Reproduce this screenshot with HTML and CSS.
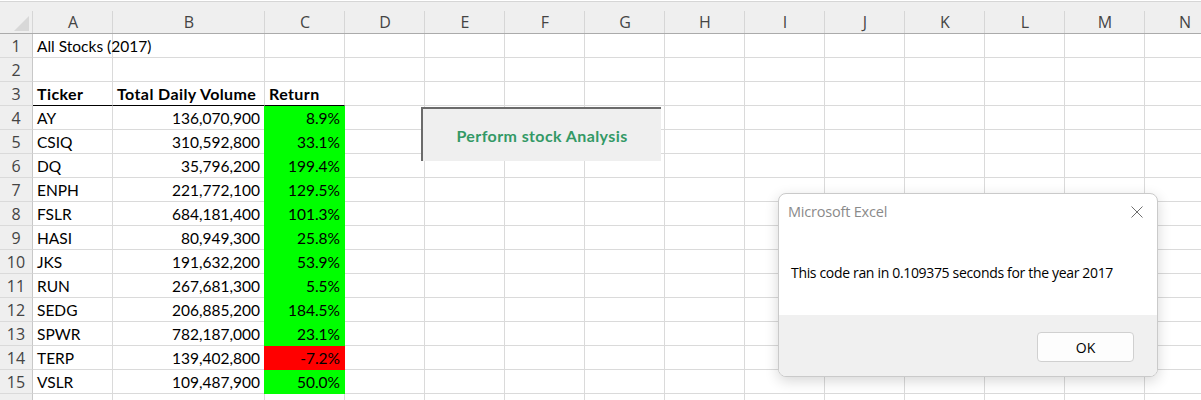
FILE: index.html
```html
<!DOCTYPE html>
<html>
<head>
<meta charset="utf-8">
<title>All Stocks (2017)</title>
<link rel="stylesheet" href="styles.css">
</head>
<body>
<div class="topbar"></div>
<div class="sheet">
  <div class="row hdr">
    <div class="hc corner"><span class="tri"></span></div>
    <div class="hc a">A</div><div class="hc b">B</div><div class="hc c">C</div><div class="hc x">D</div><div class="hc x">E</div><div class="hc x">F</div><div class="hc x">G</div><div class="hc x">H</div><div class="hc x">I</div><div class="hc x">J</div><div class="hc x">K</div><div class="hc x">L</div><div class="hc x">M</div><div class="hc x">N</div>
  </div>
  <div class="row">
    <div class="cell rh">1</div><div class="cell a">All Stocks (2017)</div><div class="cell b"></div><div class="cell c"></div><div class="cell x"></div><div class="cell x"></div><div class="cell x"></div><div class="cell x"></div><div class="cell x"></div><div class="cell x"></div><div class="cell x"></div><div class="cell x"></div><div class="cell x"></div><div class="cell x"></div><div class="cell x"></div>
  </div>
  <div class="row">
    <div class="cell rh">2</div><div class="cell a"></div><div class="cell b"></div><div class="cell c"></div><div class="cell x"></div><div class="cell x"></div><div class="cell x"></div><div class="cell x"></div><div class="cell x"></div><div class="cell x"></div><div class="cell x"></div><div class="cell x"></div><div class="cell x"></div><div class="cell x"></div><div class="cell x"></div>
  </div>
  <div class="row heads">
    <div class="cell rh">3</div><div class="cell a th">Ticker</div><div class="cell b th">Total Daily Volume</div><div class="cell c th">Return</div><div class="cell x"></div><div class="cell x"></div><div class="cell x"></div><div class="cell x"></div><div class="cell x"></div><div class="cell x"></div><div class="cell x"></div><div class="cell x"></div><div class="cell x"></div><div class="cell x"></div><div class="cell x"></div>
  </div>
  <div class="row">
    <div class="cell rh">4</div><div class="cell a">AY</div><div class="cell b num">136,070,900</div><div class="cell c num up">8.9%</div><div class="cell x"></div><div class="cell x"></div><div class="cell x"></div><div class="cell x"></div><div class="cell x"></div><div class="cell x"></div><div class="cell x"></div><div class="cell x"></div><div class="cell x"></div><div class="cell x"></div><div class="cell x"></div>
  </div>
  <div class="row">
    <div class="cell rh">5</div><div class="cell a">CSIQ</div><div class="cell b num">310,592,800</div><div class="cell c num up">33.1%</div><div class="cell x"></div><div class="cell x"></div><div class="cell x"></div><div class="cell x"></div><div class="cell x"></div><div class="cell x"></div><div class="cell x"></div><div class="cell x"></div><div class="cell x"></div><div class="cell x"></div><div class="cell x"></div>
  </div>
  <div class="row">
    <div class="cell rh">6</div><div class="cell a">DQ</div><div class="cell b num">35,796,200</div><div class="cell c num up">199.4%</div><div class="cell x"></div><div class="cell x"></div><div class="cell x"></div><div class="cell x"></div><div class="cell x"></div><div class="cell x"></div><div class="cell x"></div><div class="cell x"></div><div class="cell x"></div><div class="cell x"></div><div class="cell x"></div>
  </div>
  <div class="row">
    <div class="cell rh">7</div><div class="cell a">ENPH</div><div class="cell b num">221,772,100</div><div class="cell c num up">129.5%</div><div class="cell x"></div><div class="cell x"></div><div class="cell x"></div><div class="cell x"></div><div class="cell x"></div><div class="cell x"></div><div class="cell x"></div><div class="cell x"></div><div class="cell x"></div><div class="cell x"></div><div class="cell x"></div>
  </div>
  <div class="row">
    <div class="cell rh">8</div><div class="cell a">FSLR</div><div class="cell b num">684,181,400</div><div class="cell c num up">101.3%</div><div class="cell x"></div><div class="cell x"></div><div class="cell x"></div><div class="cell x"></div><div class="cell x"></div><div class="cell x"></div><div class="cell x"></div><div class="cell x"></div><div class="cell x"></div><div class="cell x"></div><div class="cell x"></div>
  </div>
  <div class="row">
    <div class="cell rh">9</div><div class="cell a">HASI</div><div class="cell b num">80,949,300</div><div class="cell c num up">25.8%</div><div class="cell x"></div><div class="cell x"></div><div class="cell x"></div><div class="cell x"></div><div class="cell x"></div><div class="cell x"></div><div class="cell x"></div><div class="cell x"></div><div class="cell x"></div><div class="cell x"></div><div class="cell x"></div>
  </div>
  <div class="row">
    <div class="cell rh">10</div><div class="cell a">JKS</div><div class="cell b num">191,632,200</div><div class="cell c num up">53.9%</div><div class="cell x"></div><div class="cell x"></div><div class="cell x"></div><div class="cell x"></div><div class="cell x"></div><div class="cell x"></div><div class="cell x"></div><div class="cell x"></div><div class="cell x"></div><div class="cell x"></div><div class="cell x"></div>
  </div>
  <div class="row">
    <div class="cell rh">11</div><div class="cell a">RUN</div><div class="cell b num">267,681,300</div><div class="cell c num up">5.5%</div><div class="cell x"></div><div class="cell x"></div><div class="cell x"></div><div class="cell x"></div><div class="cell x"></div><div class="cell x"></div><div class="cell x"></div><div class="cell x"></div><div class="cell x"></div><div class="cell x"></div><div class="cell x"></div>
  </div>
  <div class="row">
    <div class="cell rh">12</div><div class="cell a">SEDG</div><div class="cell b num">206,885,200</div><div class="cell c num up">184.5%</div><div class="cell x"></div><div class="cell x"></div><div class="cell x"></div><div class="cell x"></div><div class="cell x"></div><div class="cell x"></div><div class="cell x"></div><div class="cell x"></div><div class="cell x"></div><div class="cell x"></div><div class="cell x"></div>
  </div>
  <div class="row">
    <div class="cell rh">13</div><div class="cell a">SPWR</div><div class="cell b num">782,187,000</div><div class="cell c num up">23.1%</div><div class="cell x"></div><div class="cell x"></div><div class="cell x"></div><div class="cell x"></div><div class="cell x"></div><div class="cell x"></div><div class="cell x"></div><div class="cell x"></div><div class="cell x"></div><div class="cell x"></div><div class="cell x"></div>
  </div>
  <div class="row">
    <div class="cell rh">14</div><div class="cell a">TERP</div><div class="cell b num">139,402,800</div><div class="cell c num down">-7.2%</div><div class="cell x"></div><div class="cell x"></div><div class="cell x"></div><div class="cell x"></div><div class="cell x"></div><div class="cell x"></div><div class="cell x"></div><div class="cell x"></div><div class="cell x"></div><div class="cell x"></div><div class="cell x"></div>
  </div>
  <div class="row">
    <div class="cell rh">15</div><div class="cell a">VSLR</div><div class="cell b num">109,487,900</div><div class="cell c num up">50.0%</div><div class="cell x"></div><div class="cell x"></div><div class="cell x"></div><div class="cell x"></div><div class="cell x"></div><div class="cell x"></div><div class="cell x"></div><div class="cell x"></div><div class="cell x"></div><div class="cell x"></div><div class="cell x"></div>
  </div>
  <div class="row">
    <div class="cell rh"></div><div class="cell a"></div><div class="cell b"></div><div class="cell c"></div><div class="cell x"></div><div class="cell x"></div><div class="cell x"></div><div class="cell x"></div><div class="cell x"></div><div class="cell x"></div><div class="cell x"></div><div class="cell x"></div><div class="cell x"></div><div class="cell x"></div><div class="cell x"></div>
  </div>
</div>

<div class="macro-btn">Perform stock Analysis</div>

<div class="dialog">
  <div class="dlg-head">
    <span class="dlg-title">Microsoft Excel</span>
    <svg class="dlg-close" width="12" height="12" viewBox="0 0 12 12"><path d="M0.5 0.5 L11.5 11.5 M11.5 0.5 L0.5 11.5" stroke="#6e6e6e" stroke-width="1" fill="none"/></svg>
  </div>
  <div class="dlg-body">This code ran in 0.109375 seconds for the year 2017</div>
  <div class="dlg-foot">
    <div class="ok-btn">OK</div>
  </div>
</div>
</body>
</html>
```

FILE: styles.css
```css
html, body {
  margin: 0;
  padding: 0;
}
body {
  width: 1201px;
  height: 400px;
  overflow: hidden;
  position: relative;
  background: #fff;
  font-family: Lato, "Liberation Sans", sans-serif;
}
.topbar {
  height: 1px;
  background: #fff;
  border-bottom: 1px solid #d6d6d6;
}
.sheet {
  width: 1260px;
}
.row {
  display: flex;
  height: 24px;
}
.hdr {
  height: 32px;
  background: #efefef;
  border-bottom: 1px solid #ababab;
  box-sizing: border-box;
}
.a { width: 80px; }
.b { width: 152px; }
.c { width: 80px; }
.x { width: 80px; }

.hc {
  flex: none;
  box-sizing: border-box;
  position: relative;
  display: flex;
  align-items: flex-end;
  justify-content: center;
  padding-bottom: 1px;
  font-family: "Open Sans", "Noto Sans", sans-serif;
  font-size: 16px;
  line-height: 20px;
  color: #444;
}
.hc::before {
  content: "";
  position: absolute;
  left: -1px;
  top: 9px;
  bottom: 0;
  width: 1px;
  background: #d6d6d6;
}
.corner {
  width: 33px;
}
.corner::before { display: none; }
.corner::after {
  content: "";
  position: absolute;
  right: 0;
  top: 9px;
  bottom: 0;
  width: 1px;
  background: #c8c8c8;
}
.tri {
  position: absolute;
  left: 14px;
  top: 14px;
  width: 15px;
  height: 15px;
  background: #d8d8d8;
  clip-path: polygon(100% 0, 100% 100%, 0 100%);
}

.cell {
  flex: none;
  box-sizing: border-box;
  height: 24px;
  border-right: 1px solid #dadada;
  border-bottom: 1px solid #dadada;
  padding: 0 4px 2px;
  display: flex;
  align-items: flex-end;
  font-size: 15.5px;
  line-height: 18px;
  white-space: nowrap;
  color: #000;
}
.rh {
  width: 33px;
  background: #efefef;
  border-right-color: #c8c8c8;
  justify-content: center;
  padding: 0 0 1px;
  font-family: "Open Sans", "Noto Sans", sans-serif;
  font-size: 16px;
  line-height: 20px;
  color: #444;
}
.num {
  justify-content: flex-end;
}
.th {
  font-weight: 700;
  font-size: 16px;
  letter-spacing: 0.4px;
}
.heads .a, .heads .b, .heads .c {
  border-bottom-color: #000;
}
.up {
  background: #00ff00;
  border-color: #00ff00;
  box-shadow: -1px 0 0 #00ff00;
}
.down {
  background: #ff0000;
  border-color: #ff0000;
  box-shadow: -1px 0 0 #ff0000;
}

.macro-btn {
  position: absolute;
  left: 421px;
  top: 107px;
  width: 240px;
  height: 54px;
  box-sizing: border-box;
  background: #efefef;
  border-top: 2px solid #6b6b6b;
  border-left: 2px solid #6b6b6b;
  display: flex;
  align-items: center;
  justify-content: center;
  font-family: Lato, "Liberation Sans", sans-serif;
  font-weight: 700;
  font-size: 16px;
  letter-spacing: 0.4px;
  color: #339966;
}

.dialog {
  position: absolute;
  left: 778px;
  top: 193px;
  width: 380px;
  height: 184px;
  box-sizing: border-box;
  border: 1px solid #cacaca;
  border-radius: 8px;
  background: #fff;
  box-shadow: 0 4px 14px rgba(0, 0, 0, 0.16);
  overflow: hidden;
  display: flex;
  flex-direction: column;
  font-family: "Open Sans", "Noto Sans", sans-serif;
}
.dlg-head {
  height: 35px;
  flex: none;
  display: flex;
  align-items: center;
  justify-content: space-between;
  padding: 0 14px 0 9px;
}
.dlg-title {
  font-size: 14.5px;
  line-height: 20px;
  letter-spacing: -0.2px;
  color: #8a8a8a;
}
.dlg-close {
  display: block;
}
.dlg-body {
  flex: 1;
  padding: 34px 0 0 12px;
  font-size: 14px;
  line-height: 20px;
  letter-spacing: -0.33px;
  color: #000;
}
.dlg-foot {
  flex: none;
  height: 61px;
  box-sizing: border-box;
  background: #f0f0f0;
  display: flex;
  justify-content: flex-end;
  align-items: flex-start;
  padding: 17px 23px 0 0;
}
.ok-btn {
  width: 97px;
  height: 30px;
  box-sizing: border-box;
  border: 1px solid #d0d0d0;
  border-radius: 4px;
  background: #fdfdfd;
  display: flex;
  align-items: center;
  justify-content: center;
  font-size: 14px;
  color: #000;
}
```
